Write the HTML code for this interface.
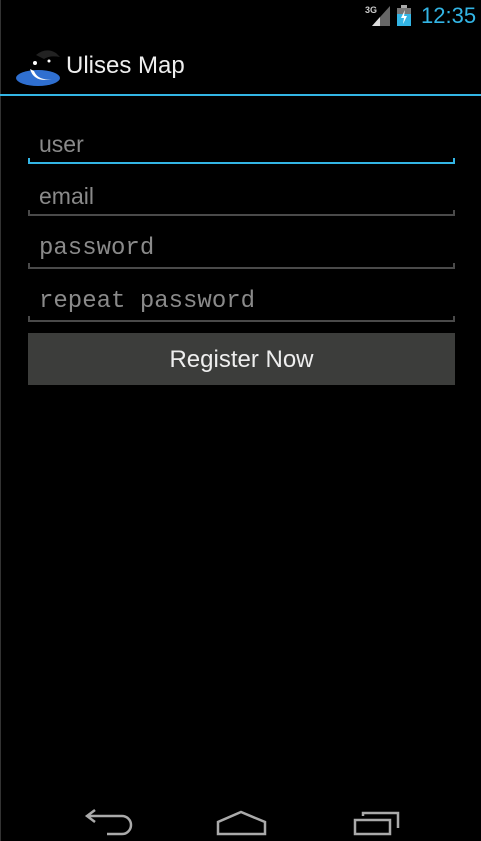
<!DOCTYPE html>
<html><head><style>
body{margin:0;width:481px;height:841px;background:#000;position:relative;overflow:hidden;font-family:"Liberation Sans",sans-serif}
.a{position:absolute}
.f{position:absolute;left:28px;width:427px;height:6px;border:2px solid #4a4a4a;border-top:none;box-sizing:border-box}
.t{position:absolute;left:39px;color:#8a8a8a;font-size:23px}
.m{font-family:"Liberation Mono","DejaVu Sans Mono",monospace;font-size:24px}
</style></head><body>
<div class="a" style="left:0;top:0;width:1px;height:841px;background:#333"></div>
<div class="a" style="left:365px;top:5px;color:#ccc;font-size:9px;font-weight:bold">3G</div>
<svg class="a" style="left:370px;top:6px" width="22" height="20"><polygon points="20,0 20,20 2,20" fill="#666"/><polygon points="10,11 10,20 2,20" fill="#ddd"/></svg>
<svg class="a" style="left:397px;top:5px" width="14" height="21"><rect x="4" y="0" width="6" height="3" fill="#aaa"/><rect x="0" y="3" width="14" height="6" fill="#777"/><rect x="0" y="9" width="14" height="12" fill="#33b5e5"/><polygon points="8,5 4,13 7,13 6,19 10,11 7,11" fill="#fff"/></svg>
<div class="a" style="left:421px;top:3px;color:#33b5e5;font-size:22px">12:35</div>
<svg class="a" style="left:16px;top:47px" width="46" height="40"><ellipse cx="22" cy="31" rx="22" ry="8" fill="#2f6fd0"/><path d="M14 22 Q18 36 36 32 Q22 34 18 24Z" fill="#fff"/><path d="M20 8 Q30 0 40 6 L44 10 Q34 8 28 12Z" fill="#222"/><circle cx="19" cy="16" r="2" fill="#fff"/><circle cx="33" cy="14" r="1.5" fill="#fff"/></svg>
<div class="a" style="left:66px;top:52px;color:#eee;font-size:24px">Ulises Map</div>
<div class="a" style="left:0;top:94px;width:481px;height:2px;background:#33b5e5"></div>
<div class="t" style="top:131px">user</div>
<div class="f" style="top:158px;border-color:#33b5e5"></div>
<div class="t" style="top:183px">email</div>
<div class="f" style="top:210px"></div>
<div class="t m" style="top:235px">password</div>
<div class="f" style="top:263px"></div>
<div class="t m" style="top:288px">repeat password</div>
<div class="f" style="top:316px"></div>
<div class="a" style="left:28px;top:333px;width:427px;height:52px;background:#3c3d3b;color:#eee;font-size:24px;text-align:center;line-height:54px">Register Now</div>
<svg class="a" style="left:80px;top:808px" width="340" height="30" fill="none" stroke="#aaa" stroke-width="2.5"><path d="M7 8 H42 A6 6 0 0 1 42 26 H27 M15 2 L7 8 L15 14"/><path d="M138 26 V14 L161 4 L185 14 V26 Z"/><path d="M275 12 H310 V26 H275 Z M283 8 V5 H318 V20"/></svg>
</body></html>
